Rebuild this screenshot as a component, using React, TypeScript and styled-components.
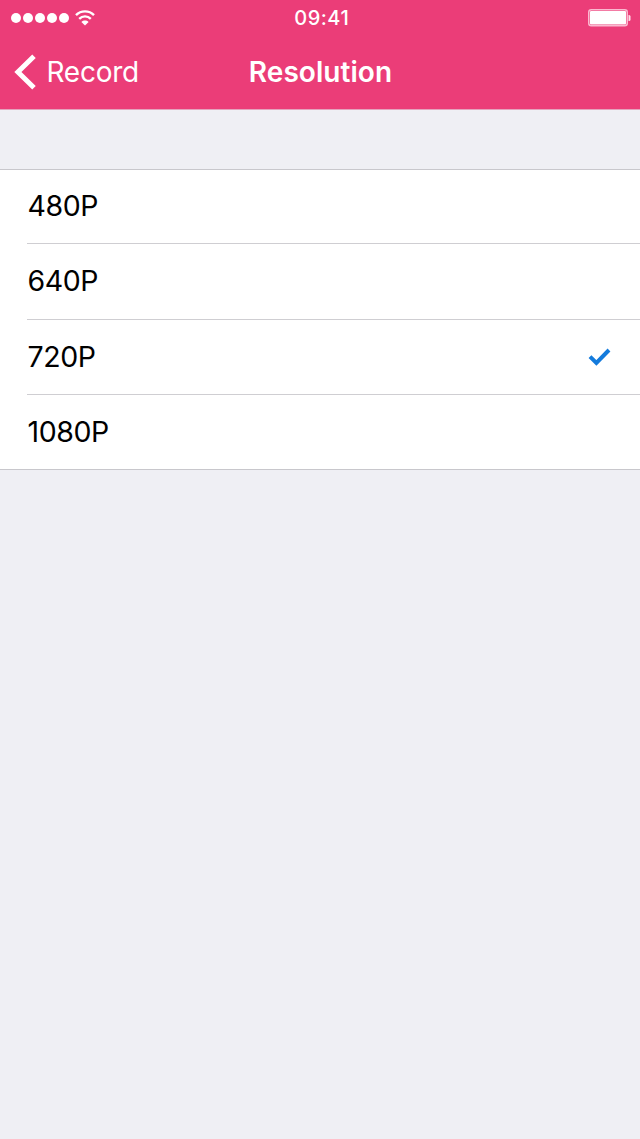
import React from 'react';
import styled, { createGlobalStyle } from 'styled-components';

const GlobalStyle = createGlobalStyle`
  * { box-sizing: border-box; }
  body { margin: 0; background: #efeff4; font-family: Inter, "Liberation Sans", sans-serif; }
`;

const Screen = styled.div`
  width: 640px;
  min-height: 1139px;
  background: #efeff4;
`;

const Header = styled.header`
  height: 110px;
  background: #eb3d78;
  border-bottom: 1px solid #e5a3bd;
  color: #fff;
`;

const StatusBar = styled.div`
  display: grid;
  grid-template-columns: 1fr auto 1fr;
  align-items: center;
  height: 35px;
  padding: 0 9px 0 10.5px;
`;

const Signal = styled.div`
  display: flex;
  align-items: center;
  gap: 2px;
`;

const Dot = styled.i`
  width: 10px;
  height: 10px;
  border-radius: 50%;
  background: #fff;
`;

const Wifi = styled.svg`
  margin-left: 4.5px;
`;

const Time = styled.time`
  padding-left: 2px;
  font-size: 20px;
  line-height: 24px;
  font-weight: 500;
  letter-spacing: 0.5px;
`;

const Battery = styled.svg`
  justify-self: end;
`;

const NavBar = styled.nav`
  display: grid;
  grid-template-columns: 1fr auto 1fr;
  align-items: center;
  height: 74px;
  padding: 0 13px;
`;

const Back = styled.a`
  display: flex;
  align-items: center;
  gap: 10.5px;
`;

const BackLabel = styled.span`
  font-size: 28px;
  line-height: 34px;
  letter-spacing: -0.25px;
`;

const Title = styled.h1`
  margin: 0;
  padding-left: 1px;
  font-size: 28px;
  line-height: 34px;
  font-weight: 600;
  letter-spacing: 0.05px;
`;

const List = styled.ul`
  list-style: none;
  margin: 59px 0 0;
  padding: 0 0 0 27px;
  background: #fff;
  border-top: 1px solid #c8c7cc;
  border-bottom: 1px solid #c8c7cc;
`;

const Row = styled.li`
  display: flex;
  align-items: center;
  justify-content: space-between;
  height: 75px;
  padding: 0 29px 0 0.5px;
  font-size: 28.5px;
  line-height: 34px;
  letter-spacing: -0.4px;
  color: #000;

  &:first-child { height: 73px; }
  &:nth-child(2) { height: 76px; }

  & + & { border-top: 1px solid #cfced2; }
`;

const Label = styled.span`
  padding-bottom: 1px;
`;

const options = ['480P', '640P', '720P', '1080P'];
const selected = '720P';

export default function App() {
  return (
    <Screen>
      <GlobalStyle />
      <Header>
        <StatusBar>
          <Signal>
            {[0, 1, 2, 3, 4].map((n) => <Dot key={n} />)}
            <Wifi width="20" height="16" viewBox="0 0 20 16" fill="none" stroke="#fff" strokeWidth="2.4">
              <path d="M1 5.2C6 .1 14 .1 19 5.2" />
              <path d="M4.2 8.8c3.3-3.3 8.3-3.3 11.6 0" />
              <path d="M10 15.6l-3.6-3.6c2.1-1.9 5.1-1.9 7.2 0z" fill="#fff" stroke="none" />
            </Wifi>
          </Signal>
          <Time>09:41</Time>
          <Battery width="43" height="18" viewBox="0 0 43 18">
            <rect x=".75" y=".75" width="38.5" height="16" rx="2.5" fill="none" stroke="#fbb9d0" strokeWidth="1.5" />
            <rect x="2" y="2" width="36" height="13.5" rx="1" fill="#fff" />
            <path d="M40.5 6h.5a1.5 1.5 0 0 1 1.5 1.5v3A1.5 1.5 0 0 1 41 12h-.5z" fill="#fde0ea" />
          </Battery>
        </StatusBar>
        <NavBar>
          <Back>
            <svg width="23" height="36" viewBox="0 0 23 36" fill="none" stroke="#fff" strokeWidth="5">
              <path d="M21 2.2L4.9 18 21 33.8" />
            </svg>
            <BackLabel>Record</BackLabel>
          </Back>
          <Title>Resolution</Title>
        </NavBar>
      </Header>
      <List>
        {options.map((option) => (
          <Row key={option}>
            <Label>{option}</Label>
            {option === selected && (
              <svg width="23" height="18" viewBox="0 0 23 18" fill="none" stroke="#147bdc" strokeWidth="4">
                <path d="M2 8.6l6.4 6.4L21 2" />
              </svg>
            )}
          </Row>
        ))}
      </List>
    </Screen>
  );
}
